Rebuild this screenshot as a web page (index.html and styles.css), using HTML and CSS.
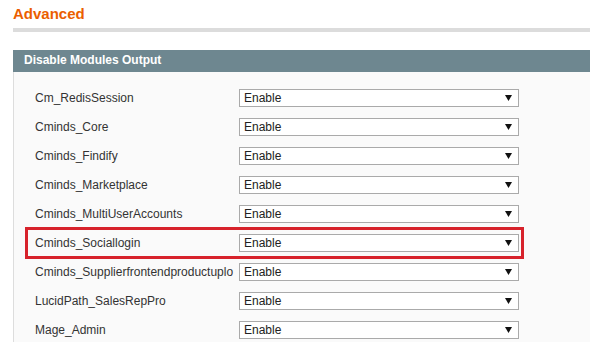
FILE: index.html
```html
<!DOCTYPE html>
<html>
<head>
<meta charset="utf-8">
<link rel="stylesheet" href="styles.css">
</head>
<body>
<div class="page">
  <h3 class="title">Advanced</h3>
  <div class="divider"></div>
  <div class="panel">
    <div class="panel-head">Disable Modules Output</div>
    <div class="panel-body">
      <div class="row"><span class="label">Cm_RedisSession</span><div class="select"><span>Enable</span><svg class="arrow" width="7" height="6" viewBox="0 0 7 6"><polygon points="0,0 7,0 3.5,6" /></svg></div></div>
      <div class="row"><span class="label">Cminds_Core</span><div class="select"><span>Enable</span><svg class="arrow" width="7" height="6" viewBox="0 0 7 6"><polygon points="0,0 7,0 3.5,6" /></svg></div></div>
      <div class="row"><span class="label">Cminds_Findify</span><div class="select"><span>Enable</span><svg class="arrow" width="7" height="6" viewBox="0 0 7 6"><polygon points="0,0 7,0 3.5,6" /></svg></div></div>
      <div class="row"><span class="label">Cminds_Marketplace</span><div class="select"><span>Enable</span><svg class="arrow" width="7" height="6" viewBox="0 0 7 6"><polygon points="0,0 7,0 3.5,6" /></svg></div></div>
      <div class="row"><span class="label">Cminds_MultiUserAccounts</span><div class="select"><span>Enable</span><svg class="arrow" width="7" height="6" viewBox="0 0 7 6"><polygon points="0,0 7,0 3.5,6" /></svg></div></div>
      <div class="row"><span class="label">Cminds_Sociallogin</span><div class="select"><span>Enable</span><svg class="arrow" width="7" height="6" viewBox="0 0 7 6"><polygon points="0,0 7,0 3.5,6" /></svg></div><div class="mark"></div></div>
      <div class="row"><span class="label">Cminds_Supplierfrontendproductuplo</span><div class="select"><span>Enable</span><svg class="arrow" width="7" height="6" viewBox="0 0 7 6"><polygon points="0,0 7,0 3.5,6" /></svg></div></div>
      <div class="row"><span class="label">LucidPath_SalesRepPro</span><div class="select"><span>Enable</span><svg class="arrow" width="7" height="6" viewBox="0 0 7 6"><polygon points="0,0 7,0 3.5,6" /></svg></div></div>
      <div class="row"><span class="label">Mage_Admin</span><div class="select"><span>Enable</span><svg class="arrow" width="7" height="6" viewBox="0 0 7 6"><polygon points="0,0 7,0 3.5,6" /></svg></div></div>
    </div>
  </div>
</div>
</body>
</html>
```
FILE: styles.css
```css
html, body {
  margin: 0;
  padding: 0;
  background: #ffffff;
  overflow: hidden;
}
body {
  font-family: "Liberation Sans", Arial, sans-serif;
  font-size: 12px;
  color: #333333;
}
.page {
  padding-left: 13px;
}
.title {
  margin: 0;
  padding-top: 5px;
  height: 23px;
  font-size: 15px;
  line-height: 18px;
  font-weight: bold;
  color: #eb5e00;
}
.divider {
  height: 4px;
  background: #dcdcdc;
}
.panel {
  margin-top: 18px;
}
.panel-head {
  height: 22px;
  line-height: 21px;
  padding-left: 11px;
  background: #6e8790;
  color: #ffffff;
  font-weight: bold;
  font-size: 12px;
}
.panel-body {
  background: #fafafa;
  border-left: 1px solid #dddddd;
  padding: 17px 0 3px 21px;
  display: flex;
  flex-direction: column;
  gap: 11px;
}
.row {
  position: relative;
  display: grid;
  grid-template-columns: 204px 280px;
  width: 484px;
  height: 18px;
  align-items: center;
}
.label {
  white-space: nowrap;
  overflow: hidden;
  color: #333333;
  line-height: 18px;
}
.select {
  box-sizing: border-box;
  height: 18px;
  background: #ffffff;
  border: 1px solid #aaaaaa;
  display: flex;
  align-items: center;
  justify-content: space-between;
  padding: 0 6px 0 4px;
  color: #222222;
  line-height: 16px;
}
.arrow {
  display: block;
  fill: #111111;
}
.mark {
  position: absolute;
  left: -10px;
  right: -5px;
  top: -7px;
  bottom: -7px;
  border: 3px solid #d7222b;
  pointer-events: none;
}
```
